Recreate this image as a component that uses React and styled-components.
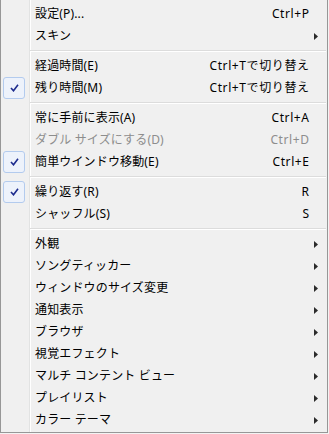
import React from "react";
import styled, { createGlobalStyle } from "styled-components";

const Global = createGlobalStyle`
  html, body { margin: 0; padding: 0; background: #f3f3f3; }
  body { font-family: "Noto Sans", "Noto Sans CJK JP", sans-serif; }
`;

const Menu = styled.div`
  width: 326px;
  height: 429px;
  padding: 3px 0 0 0;
  border: 1px solid #979797;
  border-top: none;
  background:
    linear-gradient(to right, transparent 28px, #e2e3e3 28px, #e2e3e3 29px, #ffffff 29px, #ffffff 30px, transparent 30px),
    #f0f0f0;
  display: flex;
  flex-direction: column;
  overflow: hidden;
`;

const Row = styled.div`
  height: 22px;
  display: grid;
  grid-template-columns: 22px 1fr auto 18px;
  align-items: center;
  padding-left: 2px;
  font-size: 12px;
  line-height: 22px;
  color: ${(p) => (p.$disabled ? "#8d8d8d" : "#000000")};
  white-space: nowrap;
`;

const CheckBox = styled.div`
  width: 20px;
  height: 20px;
  border: 1px solid #b3cbee;
  border-radius: 3px;
  background: #edf2fb;
  display: flex;
  align-items: center;
  justify-content: center;
`;

const Label = styled.span`
  margin-left: 10px;
  letter-spacing: 0.15px;
`;

const Shortcut = styled.span`
  padding-left: 16px;
  text-align: right;
  letter-spacing: 0.6px;
  margin-right: -0.6px;
`;

const ArrowCell = styled.div`
  display: flex;
  align-items: center;
  padding-left: 5px;
`;

const Separator = styled.div`
  height: 8px;
  margin-left: 29px;
  margin-right: 1px;
  display: flex;
  flex-direction: column;
  justify-content: center;
  &::before {
    content: "";
    display: block;
    height: 1px;
    background: #dcdcdc;
  }
  &::after {
    content: "";
    display: block;
    height: 1px;
    background: #ffffff;
  }
`;

const Check = () => (
  <svg width="9" height="8" viewBox="0 0 9 8">
    <path d="M1 4 L3.5 6.8 L8 0.8" fill="none" stroke="#1d2b8e" strokeWidth="1.6" />
  </svg>
);

const Arrow = () => (
  <svg width="4" height="7" viewBox="0 0 4 7">
    <polygon points="0,0 4,3.5 0,7" fill="#2b2b2b" />
  </svg>
);

const SEP = { sep: true };

const items = [
  { label: "設定(P)...", sc: "Ctrl+P" },
  { label: "スキン", sub: true },
  SEP,
  { label: "経過時間(E)", sc: "Ctrl+Tで切り替え" },
  { label: "残り時間(M)", sc: "Ctrl+Tで切り替え", checked: true },
  SEP,
  { label: "常に手前に表示(A)", sc: "Ctrl+A" },
  { label: "ダブル サイズにする(D)", sc: "Ctrl+D", disabled: true },
  { label: "簡単ウインドウ移動(E)", sc: "Ctrl+E", checked: true },
  SEP,
  { label: "繰り返す(R)", sc: "R", checked: true },
  { label: "シャッフル(S)", sc: "S" },
  SEP,
  { label: "外観", sub: true },
  { label: "ソングティッカー", sub: true },
  { label: "ウィンドウのサイズ変更", sub: true },
  { label: "通知表示", sub: true },
  { label: "ブラウザ", sub: true },
  { label: "視覚エフェクト", sub: true },
  { label: "マルチ コンテント ビュー", sub: true },
  { label: "プレイリスト", sub: true },
  { label: "カラー テーマ", sub: true },
];

export default function App() {
  return (
    <>
      <Global />
      <Menu>
        {items.map((it, i) =>
          it.sep ? (
            <Separator key={i} />
          ) : (
            <Row key={i} $disabled={it.disabled}>
              {it.checked ? (
                <CheckBox>
                  <Check />
                </CheckBox>
              ) : (
                <span />
              )}
              <Label>{it.label}</Label>
              <Shortcut>{it.sc || ""}</Shortcut>
              <ArrowCell>{it.sub ? <Arrow /> : null}</ArrowCell>
            </Row>
          )
        )}
      </Menu>
    </>
  );
}
